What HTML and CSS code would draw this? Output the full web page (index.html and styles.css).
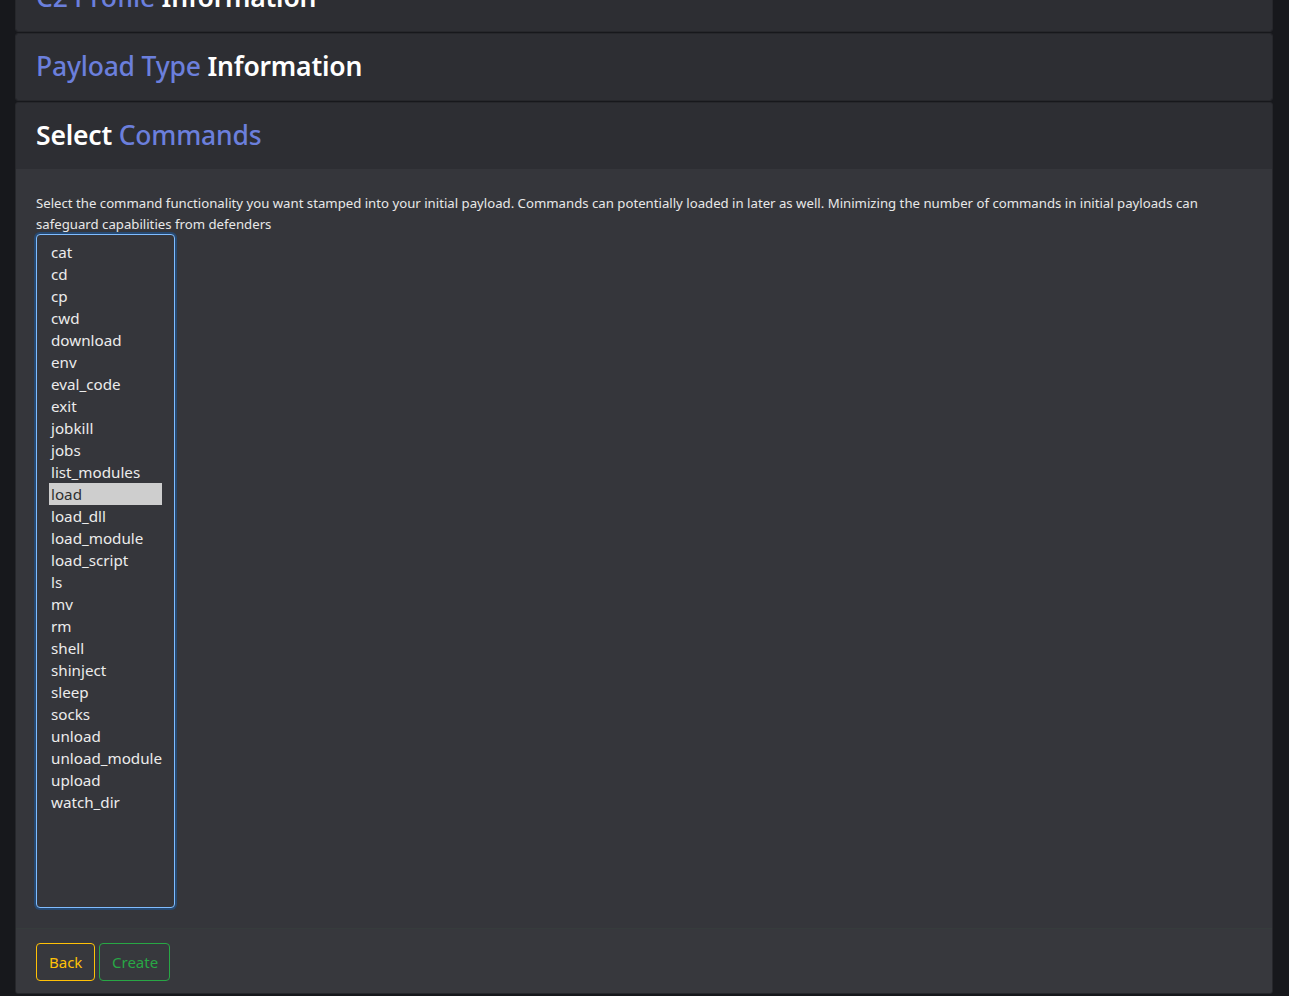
FILE: index.html
```html
<!DOCTYPE html>
<html lang="en">
<head>
<meta charset="utf-8">
<title>Create Payload</title>
<link rel="stylesheet" href="styles.css">
</head>
<body>
<div class="accordion">
  <div class="card">
    <div class="card-header"><h3 class="title"><span class="accent">C2 Profile</span> Information</h3></div>
  </div>
  <div class="card">
    <div class="card-header"><h3 class="title"><span class="accent">Payload Type</span> Information</h3></div>
  </div>
  <div class="card">
    <div class="card-header"><h3 class="title">Select <span class="accent">Commands</span></h3></div>
    <div class="card-body">
      <p class="desc">Select the command functionality you want stamped into your initial payload. Commands can potentially loaded in later as well. Minimizing the number of commands in initial payloads can safeguard capabilities from defenders</p>
      <div class="listbox">
        <div class="opt">cat</div>
        <div class="opt">cd</div>
        <div class="opt">cp</div>
        <div class="opt">cwd</div>
        <div class="opt">download</div>
        <div class="opt">env</div>
        <div class="opt">eval_code</div>
        <div class="opt">exit</div>
        <div class="opt">jobkill</div>
        <div class="opt">jobs</div>
        <div class="opt">list_modules</div>
        <div class="opt selected">load</div>
        <div class="opt">load_dll</div>
        <div class="opt">load_module</div>
        <div class="opt">load_script</div>
        <div class="opt">ls</div>
        <div class="opt">mv</div>
        <div class="opt">rm</div>
        <div class="opt">shell</div>
        <div class="opt">shinject</div>
        <div class="opt">sleep</div>
        <div class="opt">socks</div>
        <div class="opt">unload</div>
        <div class="opt">unload_module</div>
        <div class="opt">upload</div>
        <div class="opt">watch_dir</div>
      </div>
    </div>
    <div class="card-footer">
      <button class="btn btn-back">Back</button>
      <button class="btn btn-create">Create</button>
    </div>
  </div>
</div>
</body>
</html>
```

FILE: styles.css
```css
html, body {
  margin: 0;
  padding: 0;
  background: #17181c;
  height: 100%;
  overflow: hidden;
}
body {
  font-family: "Noto Sans", "Open Sans", sans-serif;
  color: #e6e6e6;
}
.accordion {
  margin: -36px 16px 0 15px;
  display: flex;
  flex-direction: column;
  gap: 1px;
}
.card {
  border: 1px solid #26272b;
  border-radius: 3px;
  background: #2d2e33;
  overflow: hidden;
}
.card-header {
  background: #2d2e33;
  padding: 12px 20px;
  height: 42px;
}
.title {
  margin: 0;
  font-size: 26.5px;
  line-height: 41px;
  font-weight: 600;
  color: #ffffff;
  letter-spacing: -0.2px;
}
.accent {
  color: #6b7fdc;
  font-weight: 500;
}
.card-body {
  background: #35363b;
  padding: 24px 20px 20px 20px;
}
.desc {
  margin: 0 0 -1px 0;
  font-size: 13.2px;
  line-height: 21px;
  color: #e8e8e8;
}
.listbox {
  width: 113px;
  height: 660px;
  padding: 6px 12px;
  border: 1px solid #80bdff;
  border-radius: 4px;
  box-shadow: 0 0 0 2px rgba(0, 123, 255, 0.28);
  background: #35363b;
  font-size: 15.2px;
  line-height: 22px;
  color: #ececec;
}
.opt {
  padding: 0 2px;
  height: 22px;
  white-space: nowrap;
}
.opt.selected {
  background: #cecece;
  color: #303030;
}
.card-footer {
  background: #37383d;
  border-top: 1px solid #363c3c;
  padding: 14px 20px 12px 20px;
  display: flex;
  gap: 4px;
}
.btn {
  font-family: inherit;
  font-size: 15px;
  height: 38px;
  padding: 0 12px;
  border-radius: 4px;
  background: transparent;
}
.btn-back {
  border: 1px solid #ffc107;
  color: #ffc107;
  width: 59px;
}
.btn-create {
  border: 1px solid #28a745;
  color: #28a745;
  width: 71px;
}
```
